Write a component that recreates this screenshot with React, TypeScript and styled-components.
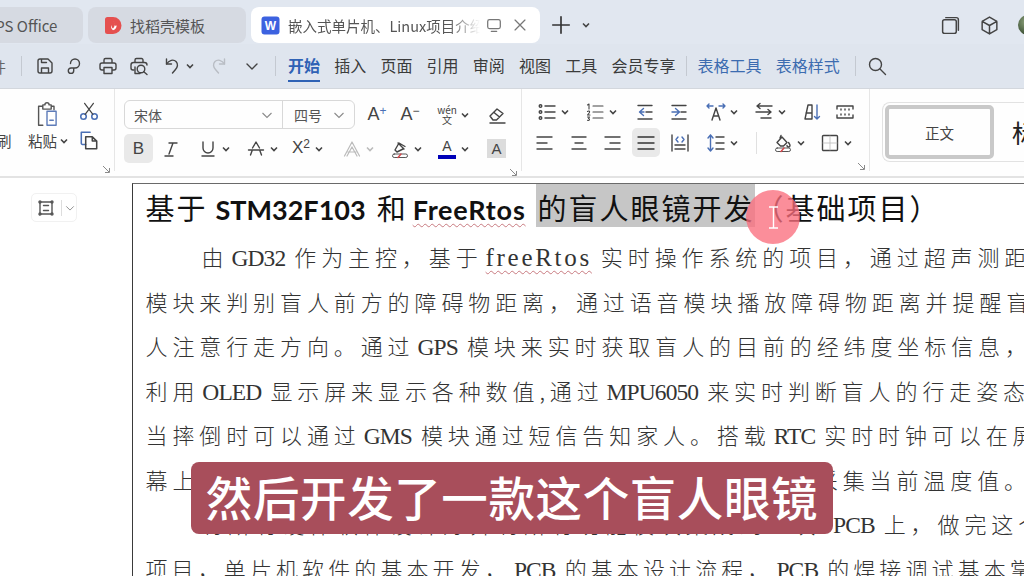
import { ReactNode } from "react";
import styled, { createGlobalStyle } from "styled-components";

const GlobalStyle = createGlobalStyle`
  html, body {
    margin: 0;
    width: 1024px;
    height: 576px;
    overflow: hidden;
    background: #fff;
  }
  * { box-sizing: border-box; }
`;

const UI_FONT = `"Noto Sans CJK SC", "Noto Sans", sans-serif`;

const Screen = styled.div`
  position: relative;
  width: 1024px;
  height: 576px;
  overflow: hidden;
  display: flex;
  flex-direction: column;
  font-family: ${UI_FONT};
  color: #333;
`;

/* tab strip */
const TabStrip = styled.div`
  height: 44px;
  flex-shrink: 0;
  background: #e1e7f0;
  display: flex;
  align-items: flex-end;
  padding: 0 0 1px 0;
  gap: 5px;
`;
const Tab = styled.div<{ $w: number; $active?: boolean; $clip?: number }>`
  width: ${(p) => p.$w}px;
  height: 36px;
  margin-left: ${(p) => p.$clip ?? 0}px;
  border-radius: 8px;
  background: ${(p) => (p.$active ? "#fff" : "#d6dae2")};
  display: flex;
  align-items: center;
  padding: 0 10px 0 ${(p) => (p.$active ? 10 : 16)}px;
  gap: 8px;
  font-size: 15px;
  color: #555;
  white-space: nowrap;
  flex-shrink: 0;
`;
const TabTitle = styled.span`
  width: 192px;
  overflow: hidden;
  font-size: 14.5px;
  color: #555;
  -webkit-mask-image: linear-gradient(90deg, #000 84%, transparent 100%);
  mask-image: linear-gradient(90deg, #000 84%, transparent 100%);
`;
const StripSpacer = styled.div`
  flex: 1;
`;
const StripTool = styled.div<{ $ml?: number; $color?: string }>`
  margin-left: ${(p) => p.$ml ?? 0}px;
  height: 36px;
  display: flex;
  align-items: center;
  color: ${(p) => p.$color ?? "#444"};
`;
const Avatar = styled.div`
  width: 20px;
  height: 20px;
  border-radius: 50%;
  margin: 0 -14px 8px 13px;
  background: radial-gradient(circle at 40% 35%, #8da27c, #3d5236 70%);
  flex-shrink: 0;
`;

/* quick access + menu row */
const MenuBar = styled.div`
  height: 45px;
  flex-shrink: 0;
  background: #dfe5ee;
  border-bottom: 1px solid #d3d7dd;
  display: flex;
  align-items: center;
`;
const ClippedGlyph = styled.span`
  width: 6px;
  overflow: hidden;
  direction: rtl;
  font-size: 15px;
  color: #666;
`;
const BarSep = styled.div<{ $ml: number }>`
  width: 1px;
  height: 20px;
  margin-left: ${(p) => p.$ml}px;
  background: #c4c9d1;
  flex-shrink: 0;
`;
const MenuItem = styled.div<{ $active?: boolean; $ml?: number; $blue?: boolean }>`
  position: relative;
  top: -1px;
  margin-left: ${(p) => p.$ml ?? 14.2}px;
  font-size: 16px;
  line-height: 22px;
  white-space: nowrap;
  font-weight: ${(p) => (p.$active ? 700 : 400)};
  color: ${(p) => (p.$active ? "#2f62b5" : p.$blue ? "#3c6cb0" : "#3b3b3b")};
  &::after {
    content: "";
    display: ${(p) => (p.$active ? "block" : "none")};
    position: absolute;
    left: 0;
    right: 0;
    bottom: -6px;
    height: 2px;
    background: #2f62b5;
  }
`;

/* ribbon */
const Ribbon = styled.div`
  height: 89px;
  flex-shrink: 0;
  background: #fefefe;
  border-bottom: 2px solid #e3e3e3;
  display: flex;
`;
const Group = styled.div<{ $w: number; $pl?: number; $last?: boolean }>`
  width: ${(p) => p.$w}px;
  flex-shrink: 0;
  padding: 11px 0 0 ${(p) => p.$pl ?? 0}px;
  margin-bottom: 5px;
  border-right: ${(p) => (p.$last ? "none" : "1px solid #e6e6e6")};
  display: flex;
  flex-direction: column;
  gap: 5px;
`;
const ToolRow = styled.div`
  height: 29px;
  display: flex;
  align-items: center;
`;
const Launcher = styled.div`
  height: 9px;
  padding-right: 3px;
  display: flex;
  justify-content: flex-end;
  color: #888;
`;
const Tool = styled.div<{ $ml?: number; $color?: string }>`
  margin-left: ${(p) => p.$ml ?? 0}px;
  display: flex;
  align-items: center;
  gap: 3px;
  flex-shrink: 0;
  color: ${(p) => p.$color ?? "#444"};
`;
const PressedTool = styled.div<{ $ml?: number; $w: number }>`
  width: ${(p) => p.$w}px;
  height: 29px;
  margin-left: ${(p) => p.$ml ?? 0}px;
  border-radius: 5px;
  background: #e9e9e9;
  display: flex;
  align-items: center;
  justify-content: center;
  flex-shrink: 0;
`;
const RowSep = styled.div<{ $ml: number }>`
  width: 1px;
  height: 22px;
  margin-left: ${(p) => p.$ml}px;
  background: #e0e0e0;
  flex-shrink: 0;
`;
const Letter = styled.span<{ $size?: number; $color?: string }>`
  width: 20px;
  text-align: center;
  font-family: "Liberation Sans", sans-serif;
  font-size: ${(p) => p.$size ?? 17}px;
  line-height: 20px;
  white-space: nowrap;
  color: ${(p) => p.$color ?? "#444"};
`;
const Sup = styled.span<{ $color?: string }>`
  font-size: 12px;
  position: relative;
  top: -5px;
  color: ${(p) => p.$color ?? "#444"};
`;
const PhoneticStack = styled.div`
  width: 20px;
  display: flex;
  flex-direction: column;
  align-items: center;
  line-height: 10px;
  font-size: 10px;
  color: #444;
`;
const ColorLetter = styled.div<{ $bar: string }>`
  width: 20px;
  height: 22px;
  display: flex;
  flex-direction: column;
  align-items: center;
  font-family: "Liberation Sans", sans-serif;
  font-size: 14px;
  line-height: 17px;
  color: #444;
  &::after {
    content: "";
    width: 18px;
    height: 4px;
    background: ${(p) => p.$bar};
  }
`;
const ShadedLetter = styled.div`
  width: 19px;
  height: 19px;
  background: #dcdcdc;
  display: flex;
  align-items: center;
  justify-content: center;
  font-family: "Liberation Sans", sans-serif;
  font-size: 15px;
  color: #444;
`;

const ClipColumns = styled.div`
  flex: 1;
  display: flex;
  margin-bottom: 7px;
`;
const BrushColumn = styled.div`
  width: 13px;
  display: flex;
  flex-direction: column;
  justify-content: flex-end;
  overflow: hidden;
  text-indent: -3px;
`;
const PasteColumn = styled.div`
  width: 61px;
  margin-left: 1px;
  padding-left: 14px;
  display: flex;
  flex-direction: column;
  justify-content: space-between;
  align-items: flex-start;
`;
const PasteIcon = styled.div`
  margin-left: 5px;
  color: #555;
  display: flex;
`;
const ClipLabel = styled.div`
  display: flex;
  align-items: center;
  gap: 2px;
  font-size: 14.5px;
  line-height: 25px;
  white-space: nowrap;
  color: #444;
`;
const CutColumn = styled.div`
  width: 28px;
  display: flex;
  flex-direction: column;
  justify-content: space-between;
  align-items: center;
  padding-bottom: 2px;
`;

const FontPicker = styled.div`
  width: 231px;
  height: 29px;
  border: 1px solid #d8d8d8;
  border-radius: 6px;
  display: flex;
  font-size: 14px;
  color: #555;
  flex-shrink: 0;
`;
const PickerPart = styled.div<{ $w: number; $divider?: boolean }>`
  width: ${(p) => p.$w}px;
  flex-shrink: 0;
  padding: 0 9px 0 ${(p) => (p.$divider ? 11 : 9)}px;
  display: flex;
  align-items: center;
  justify-content: space-between;
  border-left: ${(p) => (p.$divider ? "1px solid #d8d8d8" : "none")};
  color: #555;
`;

const StyleCard = styled.div`
  margin: 2px 0 0 12px;
  height: 60px;
  width: 200px;
  border: 1px solid #e2e2e2;
  border-right: none;
  border-radius: 8px 0 0 8px;
  padding: 2px;
  display: flex;
  align-items: center;
`;
const StyleCurrent = styled.div`
  width: 109px;
  height: 54px;
  border: 4px solid #c9c9c9;
  border-radius: 5px;
  display: flex;
  align-items: center;
  justify-content: center;
  font-size: 14.5px;
  color: #444;
  flex-shrink: 0;
`;
const StyleNext = styled.div`
  margin-left: 18px;
  font-size: 25px;
  color: #222;
  white-space: nowrap;
`;

/* document area */
const Workspace = styled.div`
  flex: 1;
  display: flex;
  background: #fff;
  min-height: 0;
`;
const Gutter = styled.div`
  width: 132px;
  flex-shrink: 0;
  padding: 15px 0 0 31px;
`;
const LayoutButton = styled.div`
  width: 46px;
  height: 29px;
  border: 1px solid #f1f1f1;
  border-radius: 5px;
  display: flex;
  align-items: center;
  padding-left: 4px;
  color: #555;
`;
const ButtonDivider = styled.div`
  width: 1px;
  height: 16px;
  margin: 0 3px 0 5px;
  background: #ddd;
`;
const Page = styled.div`
  flex: 1;
  margin-top: 5px;
  border-left: 1.5px solid #3a3a3a;
  border-top: 1.5px solid #6a6a6a;
  padding-left: 12.5px;
  overflow: hidden;
  color: #222;
`;
const Heading = styled.div`
  height: 50px;
  white-space: nowrap;
  font-size: 29px;
  line-height: 46px;
  letter-spacing: 2px;
  color: #111;
  font-family: "Noto Sans CJK SC", sans-serif;
`;
const HeadingLatin = styled.span<{ $squiggle?: boolean; $ml: number; $mr: number }>`
  font-family: Lato, "Open Sans", sans-serif;
  font-weight: 700;
  font-size: 27px;
  letter-spacing: ${(p) => (p.$squiggle ? 0.8 : 0)}px;
  margin: 0 ${(p) => p.$mr}px 0 ${(p) => p.$ml}px;
  text-decoration: ${(p) => (p.$squiggle ? "underline wavy #c87a80 1px" : "none")};
  text-underline-offset: 3px;
`;
const Selected = styled.span`
  background: #c6c6c6;
  padding-left: 2px;
  height: 43px;
  display: inline-block;
`;
const BodyLine = styled.div<{ $indent?: boolean; $tight?: boolean }>`
  height: 44.5px;
  line-height: 44.5px;
  padding-left: ${(p) => (p.$indent ? 56 : 0)}px;
  white-space: nowrap;
  font-family: "Noto Sans CJK SC", sans-serif;
  font-weight: 300;
  font-size: 22px;
  letter-spacing: ${(p) => (p.$tight ? 4.1 : 4.9)}px;
  color: #333;
`;
const Latin = styled.span<{ $squiggle?: boolean }>`
  font-family: "Liberation Serif", serif;
  font-size: ${(p) => (p.$squiggle ? 25 : 23.5)}px;
  letter-spacing: ${(p) => (p.$squiggle ? 2.7 : -0.9)}px;
  margin: 0 ${(p) => (p.$squiggle ? 9 : 9)}px 0 3px;
  text-decoration: ${(p) => (p.$squiggle ? "underline wavy #c87a80 1px" : "none")};
  text-underline-offset: 4px;
`;

/* overlays */
const Caption = styled.div`
  position: absolute;
  left: 191px;
  top: 462px;
  width: 642px;
  height: 72px;
  border-radius: 8px;
  background: #a84e5b;
  color: #fff;
  font-size: 46.5px;
  font-weight: 500;
  line-height: 68px;
  letter-spacing: 0.6px;
  text-align: center;
  white-space: nowrap;
`;
const CursorDot = styled.div`
  position: absolute;
  left: 746px;
  top: 190px;
  width: 54px;
  height: 54px;
  border-radius: 50%;
  background: rgba(250, 110, 125, 0.78);
  display: flex;
  align-items: center;
  justify-content: center;
  color: #fff;
`;

const Ico = styled.svg.attrs<{ $s?: number }>((p) => ({
  viewBox: "0 0 20 20",
  width: p.$s ?? 20,
  height: p.$s ?? 20,
}))<{ $s?: number }>`
  fill: none;
  stroke: currentColor;
  stroke-width: 1.4;
  stroke-linecap: round;
  stroke-linejoin: round;
  flex-shrink: 0;
  display: block;
`;

const BLUE = "#4a6fb5";

function Caret({ color = "#444" }: { color?: string }) {
  return (
    <svg width="10" height="8" viewBox="0 0 10 8" fill="none" stroke={color} strokeWidth="1.6">
      <path d="M2 2.5 5 5.5 8 2.5" />
    </svg>
  );
}

function LightChevron({ s = 12 }: { s?: number }) {
  return (
    <svg width={s} height={s} viewBox="0 0 12 12" fill="none" stroke="#8a8a8a" strokeWidth="1.1">
      <path d="M1.5 4 6 8.5 10.5 4" />
    </svg>
  );
}

function LauncherMark() {
  return (
    <svg width="9" height="9" viewBox="0 0 9 9" fill="none" stroke="#8a8a8a" strokeWidth="1">
      <path d="M1 1 7 7M7.5 3v4.5H3" />
    </svg>
  );
}

function AlignIcon({ rows }: { rows: [number, number][] }) {
  return (
    <Ico>
      {rows.map(([a, b], i) => (
        <path key={i} d={`M${a} ${4 + i * 6}H${b}`} />
      ))}
    </Ico>
  );
}

function Bar({ children, ml }: { children: ReactNode; ml?: number }) {
  return <Tool $ml={ml}>{children}</Tool>;
}

export default function App() {
  return (
    <Screen>
      <GlobalStyle />
      <TabStrip>
        <Tab $w={117} $clip={-34}>
          <span>WPS Office</span>
        </Tab>
        <Tab $w={158}>
          <svg width="18" height="19" viewBox="0 0 18 19">
            <path d="M1 3.5A2.5 2.5 0 0 1 3.5 1H9a8.5 8.5 0 0 1 0 17H3.5A2.5 2.5 0 0 1 1 15.5z" fill="#e5504f" />
            <path d="M9.5 5c2 2.5 1.5 5.5-.5 7.5-1-.5-1.5-2-1-3.5C6.5 10.5 7 13 9 14.2c2.5-.5 4-3 3.5-5C11.5 10 11 10 10.8 9c-.1-1.5-.4-3-1.3-4z" fill="#fff" />
          </svg>
          <span>找稻壳模板</span>
        </Tab>
        <Tab $w={289} $active>
          <svg width="19" height="19" viewBox="0 0 19 19">
            <rect x="0.5" y="0.5" width="18" height="18" rx="3" fill="#3c62e0" />
            <text x="9.5" y="13.8" textAnchor="middle" fontFamily="Liberation Sans" fontWeight="700" fontSize="12" fill="#fff">
              W
            </text>
          </svg>
          <TabTitle>嵌入式单片机、Linux项目介绍文档</TabTitle>
          <Tool $color="#777" $ml={-3}>
            <Ico $s={18}>
              <rect x="3" y="4" width="14" height="10" rx="2" />
              <path d="M7 17h6" />
            </Ico>
          </Tool>
          <Tool $color="#777" $ml={0}>
            <Ico $s={18}>
              <path d="M4.5 4.5l11 11M15.5 4.5l-11 11" />
            </Ico>
          </Tool>
        </Tab>
        <StripTool $ml={5} $color="#333">
          <Ico $s={22}>
            <path d="M10 2.5v15M2.5 10h15" strokeWidth="1.5" />
          </Ico>
        </StripTool>
        <StripTool $ml={4}>
          <Caret />
        </StripTool>
        <StripSpacer />
        <StripTool>
          <Ico $s={21}>
            <rect x="2.5" y="4.5" width="13" height="13" rx="1.8" />
            <path d="M5.5 2.5h10a2 2 0 0 1 2 2v10" />
          </Ico>
        </StripTool>
        <StripTool $ml={13}>
          <Ico $s={21}>
            <path d="M10 2l7 4v8l-7 4-7-4V6zM3 6l7 4 7-4M10 10v8" />
          </Ico>
        </StripTool>
        <Avatar />
      </TabStrip>

      <MenuBar>
        <ClippedGlyph>件</ClippedGlyph>
        <BarSep $ml={15} />
        <Bar ml={13}>
          <Ico>
            <path d="M3 5a2 2 0 0 1 2-2h8l4 4v8a2 2 0 0 1-2 2H5a2 2 0 0 1-2-2zM6.5 17v-5h7v5M6.5 3v3.5h5" />
          </Ico>
        </Bar>
        <Bar ml={8}>
          <Ico>
            <path d="M7.5 7.5a4.5 4.5 0 1 1 4.5 4.500H8A2.7 2.7 0 1 0 10.7 14.7V12" />
          </Ico>
        </Bar>
        <Bar ml={15}>
          <Ico>
            <path d="M6 7V4a1.5 1.5 0 0 1 1.5-1.5h5A1.5 1.5 0 0 1 14 4v3M5 14H4a2 2 0 0 1-2-2V9a2 2 0 0 1 2-2h12a2 2 0 0 1 2 2v3a2 2 0 0 1-2 2h-1M6 11.5h8v6H6z" />
          </Ico>
        </Bar>
        <Bar ml={11}>
          <Ico>
            <path d="M6 6.5V4A1.5 1.5 0 0 1 7.5 2.5h5A1.5 1.5 0 0 1 14 4v2.5M5 14H4a2 2 0 0 1-2-2V9a2.5 2.5 0 0 1 2.5-2.5h11A2.5 2.5 0 0 1 18 9" />
            <circle cx="12" cy="13" r="3.8" />
            <path d="M14.8 15.8 18 18.5M6 11v6.5h5" />
          </Ico>
        </Bar>
        <Bar ml={13}>
          <Ico>
            <path d="M4.5 3v5h5" />
            <path d="M4.5 8C7 4 11.5 3 14 5.5c2.5 2.5 1.5 6-.5 8L10.5 17" />
          </Ico>
          <Caret />
        </Bar>
        <Tool $ml={14} $color="#b9bdc4">
          <Ico>
            <path d="M15.5 3v5h-5" />
            <path d="M15.5 8C13 4 8.5 3 6 5.5c-2.5 2.5-1.5 6 .5 8l3 3.5" />
          </Ico>
        </Tool>
        <Bar ml={13}>
          <Ico>
            <path d="M5 8l5 5 5-5" />
          </Ico>
        </Bar>
        <BarSep $ml={13} />
        <MenuItem $active $ml={12}>开始</MenuItem>
        <MenuItem>插入</MenuItem>
        <MenuItem>页面</MenuItem>
        <MenuItem>引用</MenuItem>
        <MenuItem>审阅</MenuItem>
        <MenuItem>视图</MenuItem>
        <MenuItem>工具</MenuItem>
        <MenuItem>会员专享</MenuItem>
        <BarSep $ml={11} />
        <MenuItem $blue $ml={10}>表格工具</MenuItem>
        <MenuItem $blue>表格样式</MenuItem>
        <BarSep $ml={15} />
        <Bar ml={11}>
          <Ico>
            <circle cx="8.5" cy="8.5" r="6" />
            <path d="M13 13l5.5 5.5" />
          </Ico>
        </Bar>
      </MenuBar>

      <Ribbon>
        <Group $w={115}>
          <ClipColumns>
            <BrushColumn>
              <ClipLabel>刷</ClipLabel>
            </BrushColumn>
            <PasteColumn>
              <PasteIcon>
                <Ico $s={28}>
                  <path d="M7 4.5H4v13.5h3M13 4.5h2v2.5M7 3.5h1.5a1.5 1.5 0 0 1 3 0H13v3H7z" strokeWidth="1" />
                  <path d="M10 8h6.5v10H10zM12 14.5h2.5" strokeWidth="1" stroke="#5d7bb8" />
                </Ico>
              </PasteIcon>
              <ClipLabel>
                粘贴
                <Caret />
              </ClipLabel>
            </PasteColumn>
            <CutColumn>
              <Tool $color={BLUE}>
                <Ico $s={22}>
                  <circle cx="5" cy="15" r="2.5" />
                  <circle cx="15" cy="15" r="2.5" />
                  <path d="M6.5 13 14 3M13.5 13 6 3" stroke="#444" strokeWidth="1.1" />
                </Ico>
              </Tool>
              <Tool $color={BLUE}>
                <Ico $s={22}>
                  <path d="M7 14H4a1 1 0 0 1-1-1V3h8" />
                  <path d="M7 7h6l4 4v7H7zM13 7v4h4" stroke="#444" />
                </Ico>
              </Tool>
            </CutColumn>
          </ClipColumns>
          <Launcher>
            <LauncherMark />
          </Launcher>
        </Group>

        <Group $w={407} $pl={9}>
          <ToolRow>
            <FontPicker>
              <PickerPart $w={157}>
                宋体
                <LightChevron />
              </PickerPart>
              <PickerPart $w={72} $divider>
                四号
                <LightChevron />
              </PickerPart>
            </FontPicker>
            <Bar ml={12}>
              <Letter $size={18}>
                A<Sup $color={BLUE}>+</Sup>
              </Letter>
            </Bar>
            <Bar ml={13}>
              <Letter $size={18}>
                A<Sup>−</Sup>
              </Letter>
            </Bar>
            <Bar ml={17}>
              <PhoneticStack>
                <span>wén</span>
                <span>文</span>
              </PhoneticStack>
              <Caret />
            </Bar>
            <Bar ml={17}>
              <Ico>
                <path d="M3 11l7-7 6 4.5-6.5 6.5H6zM7 7.5l5.5 4.5M3 18h15" />
              </Ico>
            </Bar>
          </ToolRow>
          <ToolRow>
            <PressedTool $w={29}>
              <Letter $size={17}>B</Letter>
            </PressedTool>
            <Bar ml={8}>
              <Ico>
                <path d="M8 4h8M12 4 8 15M4 17h8" />
              </Ico>
            </Bar>
            <Bar ml={17}>
              <Ico>
                <path d="M5 3v6a5 5 0 0 0 10 0V3M4 17h12" />
              </Ico>
              <Caret />
            </Bar>
            <Bar ml={15}>
              <Ico>
                <path d="M6.5 9 10 3l3.5 6M2.5 11h15M6 12l-1.5 4M14 12l1.5 4" />
              </Ico>
              <Caret />
            </Bar>
            <Bar ml={12}>
              <Letter $size={17}>
                X<Sup>2</Sup>
              </Letter>
              <Caret />
            </Bar>
            <Tool $ml={18} $color="#bbb">
              <Ico>
                <path d="M2.5 17 10 3l7.5 14M6 13h8M5 17l5-9 5 9" strokeWidth="1.2" />
              </Ico>
              <Caret color="#bbb" />
            </Tool>
            <Bar ml={15}>
              <Ico>
                <path d="M5 11l4-7 6 3.5M5 11l2 2 6-3M8 4l6 6" />
                <rect x="2.5" y="15" width="15" height="3.5" rx="1.7" strokeWidth="0.9" />
                <path d="M8 18.5l3-3.5" stroke="#d8454a" />
              </Ico>
              <Caret />
            </Bar>
            <Bar ml={14}>
              <ColorLetter $bar="#0000b8">A</ColorLetter>
              <Caret />
            </Bar>
            <Bar ml={17}>
              <ShadedLetter>A</ShadedLetter>
            </Bar>
          </ToolRow>
          <Launcher>
            <LauncherMark />
          </Launcher>
        </Group>

        <Group $w={348} $pl={13}>
          <ToolRow>
            <Bar ml={2}>
              <Ico>
                <circle cx="3.5" cy="4" r="1.3" />
                <circle cx="3.5" cy="10" r="1.3" />
                <circle cx="3.5" cy="16" r="1.3" />
                <path d="M8 4h10M8 10h10M8 16h10" />
              </Ico>
              <Caret />
            </Bar>
            <Bar ml={15}>
              <Ico>
                <path d="M8 4h10M8 10h10M8 16h10M2.5 3 4 2v5M2.500 9.5c1-1 2.5-.5 2 1l-2 2.5h2.5M2.500 15h2l-1 1.500c1.200 0 1.500 2-.2 2l-.8-.3" strokeWidth="1.1" />
              </Ico>
              <Caret />
            </Bar>
            <Bar ml={17}>
              <Ico>
                <path d="M3 3.5h14M3 17h14M11 10h6" />
                <path d="M8.5 6.5 4.5 10l4 3.5M4.5 10h4.5" stroke={BLUE} />
              </Ico>
            </Bar>
            <Bar ml={14}>
              <Ico>
                <path d="M3 3.5h14M3 17h14M12 10h5" />
                <path d="M6.5 6.5 10.5 10l-4 3.5M3 10h7" stroke={BLUE} />
              </Ico>
            </Bar>
            <Bar ml={17}>
              <Ico>
                <path d="M6 18l4-12 4 12M7.5 14h5" />
                <path d="M1 4h6M13 4h6M3 2 1 4l2 2M17 2l2 2-2 2" stroke={BLUE} />
              </Ico>
              <Caret />
            </Bar>
            <Bar ml={15}>
              <Ico>
                <path d="M18 4H3M6 1.5 3 4l3 2.5M2 10h15M14 7.5 17 10l-3 2.5M7 16h10" />
              </Ico>
              <Caret />
            </Bar>
            <Bar ml={15}>
              <Ico>
                <path d="M3 17 6 3h4v14zM4 11h6" />
                <path d="M15 3v14M12.5 14.5 15 17l2.5-2.5" stroke={BLUE} />
              </Ico>
            </Bar>
            <Bar ml={13}>
              <Ico>
                <path d="M2 4h16M2 16h16M2 4v3M18 4v3M2 13v3M18 13v3M6 7v1M10 7v1M14 7v1M6 12v1M10 12v1M14 12v1" />
              </Ico>
            </Bar>
          </ToolRow>
          <ToolRow>
            <Tool>
              <AlignIcon rows={[[2, 17], [2, 12], [2, 17]]} />
            </Tool>
            <Bar ml={14}>
              <AlignIcon rows={[[3, 17], [6, 14], [3, 17]]} />
            </Bar>
            <Bar ml={13}>
              <AlignIcon rows={[[3, 18], [8, 18], [3, 18]]} />
            </Bar>
            <PressedTool $w={28} $ml={10}>
              <AlignIcon rows={[[2, 18], [2, 18], [2, 18]]} />
            </PressedTool>
            <Bar ml={10}>
              <Ico>
                <path d="M2 2v16M18 2v16M5 12h10M5 16h10" />
                <path d="M8 4 6 6.5 8 9M12 4l2 2.5-2 2.5" stroke={BLUE} />
              </Ico>
            </Bar>
            <Bar ml={16}>
              <Ico>
                <path d="M10 4h8M10 10h8M10 16h8" />
                <path d="M4.5 2v16M2 5l2.5-3L7 5M2 15l2.5 3L7 15" stroke={BLUE} />
              </Ico>
              <Caret />
            </Bar>
            <RowSep $ml={17} />
            <Bar ml={16}>
              <Ico>
                <path d="M4 9.5 9 4l5 5.5-3.5 3.5h-3zM7 5l1-2.5" />
                <path d="M15.5 9.5c1 1.5 1.5 2 1.5 3a1.5 1.5 0 0 1-3 0" />
                <rect x="2.5" y="15" width="15" height="3.5" rx="1.7" strokeWidth="0.9" />
                <path d="M8 18.5l3-3.5" stroke="#d8454a" />
              </Ico>
              <Caret />
            </Bar>
            <Bar ml={14}>
              <Ico>
                <rect x="2.5" y="2.5" width="15" height="15" rx="1" />
                <path d="M10 3v14M3 10h14" strokeWidth="0.8" stroke="#bbb" />
              </Ico>
              <Caret />
            </Bar>
          </ToolRow>
          <Launcher>
            <LauncherMark />
          </Launcher>
        </Group>

        <Group $w={154} $last>
          <StyleCard>
            <StyleCurrent>正文</StyleCurrent>
            <StyleNext>标题 1</StyleNext>
          </StyleCard>
        </Group>
      </Ribbon>

      <Workspace>
        <Gutter>
          <LayoutButton>
            <Ico $s={20}>
              <path d="M4 4h12v12H4zM7.5 7.5h5M7.5 12.5h5" />
              <circle cx="4" cy="4" r="1" />
              <circle cx="16" cy="4" r="1" />
              <circle cx="4" cy="16" r="1" />
              <circle cx="16" cy="16" r="1" />
            </Ico>
            <ButtonDivider />
            <LightChevron s={10} />
          </LayoutButton>
        </Gutter>
        <Page>
          <Heading>
            基于
            <HeadingLatin $ml={8} $mr={11}>STM32F103</HeadingLatin>
            和
            <HeadingLatin $squiggle $ml={5} $mr={10}>FreeRtos</HeadingLatin>
            <Selected>的盲人眼镜开发</Selected>（基础项目）
          </Heading>
          <BodyLine $indent>
            由<Latin>GD32</Latin>作为主控，基于<Latin $squiggle>freeRtos</Latin>实时操作系统的项目，通过超声测距
          </BodyLine>
          <BodyLine>模块来判别盲人前方的障碍物距离，通过语音模块播放障碍物距离并提醒盲</BodyLine>
          <BodyLine>
            人注意行走方向。通过<Latin>GPS</Latin>模块来实时获取盲人的目前的经纬度坐标信息，
          </BodyLine>
          <BodyLine>
            利用<Latin>OLED</Latin>显示屏来显示各种数值,通过<Latin>MPU6050</Latin>来实时判断盲人的行走姿态
          </BodyLine>
          <BodyLine>
            当摔倒时可以通过<Latin>GMS</Latin>模块通过短信告知家人。搭载<Latin>RTC</Latin>实时时钟可以在屏
          </BodyLine>
          <BodyLine>
            幕上显示当前实时时间，通过<Latin>DHT11</Latin>温湿度传感器模块来采集当前温度值。
          </BodyLine>
          <BodyLine $indent>
            将所有硬件软件设计好并将所有功能模块集成到一块 <Latin>PCB</Latin>上，做完这个
          </BodyLine>
          <BodyLine $tight>
            项目，单片机软件的基本开发，<Latin>PCB</Latin>的基本设计流程，<Latin>PCB</Latin>的焊接调试基本掌
          </BodyLine>
        </Page>
      </Workspace>

      <CursorDot>
        <svg width="11" height="23" viewBox="0 0 11 23" fill="none" stroke="#fff" strokeWidth="1.4">
          <path d="M1 1h9M5.5 1v21M1 22h9" />
        </svg>
      </CursorDot>
      <Caption>然后开发了一款这个盲人眼镜</Caption>
    </Screen>
  );
}
